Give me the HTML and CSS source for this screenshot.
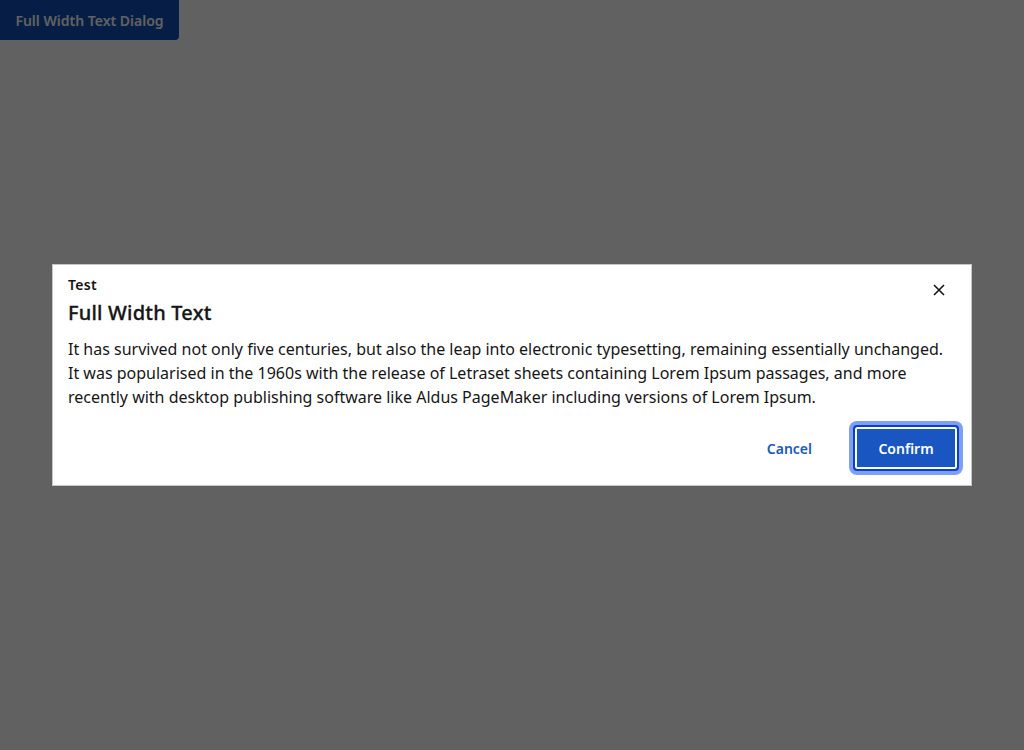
FILE: index.html
```html
<!DOCTYPE html>
<html>
<head>
<meta charset="utf-8">
<link rel="stylesheet" href="styles.css">
</head>
<body>
<button class="trigger">Full Width Text Dialog</button>
<div class="overlay">
  <div class="dialog" role="dialog">
    <div class="header">
      <div class="titles">
        <div class="label">Test</div>
        <h2 class="heading">Full Width Text</h2>
      </div>
      <button class="close" aria-label="Close">
        <svg width="12" height="12" viewBox="0 0 12 12"><path d="M1 1 L11 11 M11 1 L1 11" stroke="#161616" stroke-width="1.6" fill="none"/></svg>
      </button>
    </div>
    <p class="body">It has survived not only five centuries, but also the leap into electronic typesetting, remaining essentially unchanged. It was popularised in the 1960s with the release of Letraset sheets containing Lorem Ipsum passages, and more recently with desktop publishing software like Aldus PageMaker including versions of Lorem Ipsum.</p>
    <div class="footer">
      <button class="btn-cancel">Cancel</button>
      <button class="btn-confirm">Confirm</button>
    </div>
  </div>
</div>
</body>
</html>
```

FILE: styles.css
```css
html, body {
  margin: 0;
  padding: 0;
  height: 100%;
  background: #ffffff;
  font-family: "Noto Sans", "Open Sans", sans-serif;
}
.trigger {
  display: block;
  width: 179px;
  height: 40px;
  margin: 0;
  padding: 0;
  border: none;
  border-radius: 0 0 4px 0;
  background: #104fb6;
  color: #ffffff;
  font-family: inherit;
  font-size: 14px;
  font-weight: 600;
  white-space: nowrap;
}
.overlay {
  position: fixed;
  inset: 0;
  background: rgba(0, 0, 0, 0.62);
  display: flex;
  align-items: center;
  justify-content: center;
}
.dialog {
  box-sizing: border-box;
  width: 920px;
  background: #ffffff;
  border: 1px solid #c6c6c6;
  padding: 11px 12px 14px 15px;
  color: #161616;
}
.header {
  display: flex;
  justify-content: space-between;
  align-items: flex-start;
}
.label {
  font-size: 14px;
  font-weight: 600;
  line-height: 18px;
  letter-spacing: 0.3px;
}
.heading {
  margin: 5px 0 0 0;
  font-size: 20px;
  font-weight: 500;
  line-height: 28px;
  letter-spacing: 0.2px;
  -webkit-text-stroke: 0.3px #161616;
}
.close {
  margin: 8px 14px 0 0;
  padding: 0;
  border: none;
  background: none;
  width: 12px;
  height: 12px;
  display: flex;
}
.body {
  margin: 10px 0 0 0;
  font-size: 16px;
  line-height: 24px;
  padding-right: 10px;
}
.footer {
  display: flex;
  justify-content: flex-end;
  align-items: center;
  gap: 41px;
  margin-top: 16px;
}
.btn-cancel {
  border: none;
  background: none;
  color: #1b57c2;
  font-family: inherit;
  font-size: 14px;
  font-weight: 600;
  padding: 0;
}
.btn-confirm {
  box-sizing: border-box;
  width: 106px;
  height: 46px;
  border: 2px solid #0b3fd4;
  border-radius: 4px;
  background: #1a56c1;
  box-shadow: inset 0 0 0 2px #ffffff, 0 0 0 4px #7f9ff0;
  color: #ffffff;
  font-family: inherit;
  font-size: 14px;
  font-weight: 600;
  padding: 0;
}
```
